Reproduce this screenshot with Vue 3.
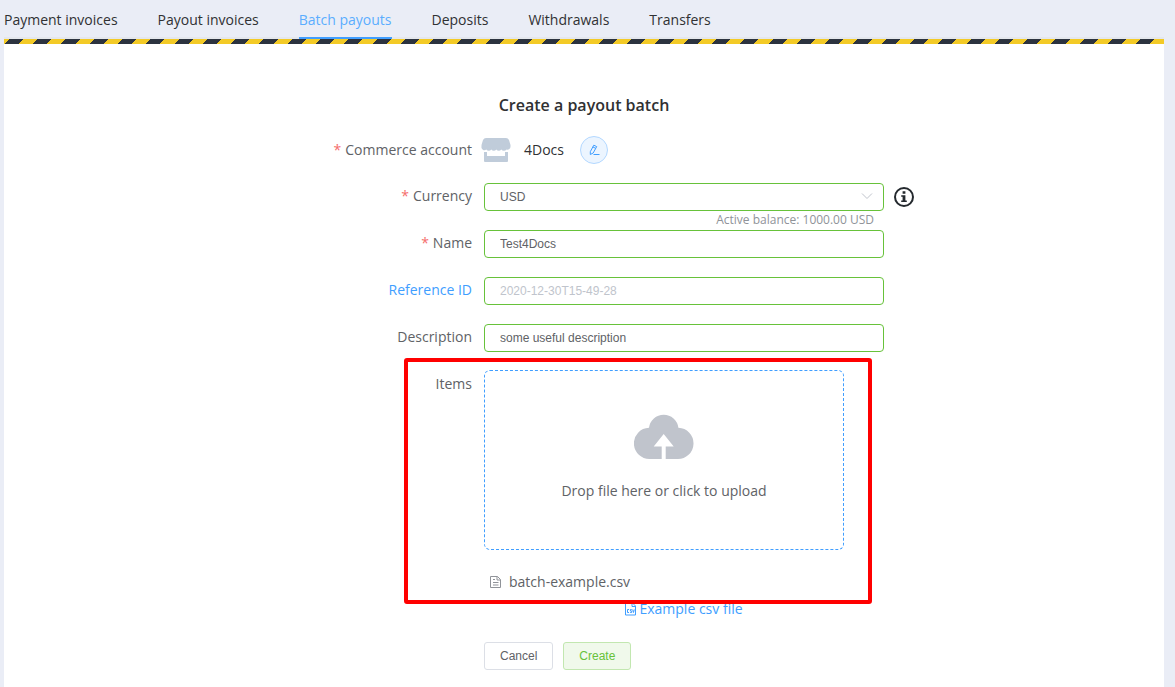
<script setup>
import { ref } from 'vue'

const tabs = ['Payment invoices', 'Payout invoices', 'Batch payouts', 'Deposits', 'Withdrawals', 'Transfers']
const active = ref('Batch payouts')
const currency = ref('USD')
const name = ref('Test4Docs')
const reference = ref('')
const description = ref('some useful description')
</script>

<template>
  <div class="page">
    <nav class="tabs">
      <a
        v-for="tab in tabs"
        :key="tab"
        href="#"
        class="tab"
        :class="{ active: tab === active }"
        @click.prevent="active = tab"
      >{{ tab }}</a>
    </nav>
    <main class="panel">
      <div class="stripe"></div>
      <form class="form" @submit.prevent>
        <h1 class="title">Create a payout batch</h1>

        <div class="row">
          <span class="label tall required">Commerce account</span>
          <div class="content account">
            <svg class="shop" viewBox="0 0 30 26" aria-hidden="true">
              <path d="M5 1h20q2 0 3 2l1.500 5v1.500a3 3 0 0 1-4 3 3.200 3.200 0 0 1-5.200 0 3.200 3.200 0 0 1-5 0 3.200 3.200 0 0 1-5 0 3.200 3.200 0 0 1-5 0 3 3 0 0 1-4.800-3V8L2 3q1-2 3-2z" />
              <path d="M3 15h3v4h18v-4h3v9q0 1-1 1H4q-1 0-1-1z" />
            </svg>
            <span class="account-name">4Docs</span>
            <button type="button" class="edit" aria-label="Change account">
              <svg viewBox="0 0 12 12" aria-hidden="true">
                <path d="M5.800 1.200 8.700 2.600 5.200 9 2.300 10.500 2.300 7.700zM4.800 2.900l2.800 1.400M5.500 10.500h6" />
              </svg>
            </button>
          </div>
        </div>

        <div class="row">
          <label class="label required" for="currency">Currency</label>
          <div class="content">
            <select id="currency" v-model="currency" class="field">
              <option>USD</option>
            </select>
            <svg class="arrow" viewBox="0 0 12 12" aria-hidden="true"><path d="M1 2.500l5 5 5-5" /></svg>
            <svg class="info" viewBox="0 0 20 20" aria-hidden="true">
              <circle cx="10" cy="10" r="9" />
              <path d="M8.600 4.200h2.800v2.600H8.600zM7.200 8.200h4.200v5.200h1.400V15H7.200v-1.600h1.400V9.800H7.200z" />
            </svg>
            <span class="hint">Active balance: 1000.00 USD</span>
          </div>
        </div>

        <div class="row">
          <label class="label required" for="name">Name</label>
          <div class="content"><input id="name" v-model="name" class="field" type="text" /></div>
        </div>

        <div class="row">
          <label class="label link" for="reference">Reference ID</label>
          <div class="content">
            <input id="reference" v-model="reference" class="field" type="text" placeholder="2020-12-30T15-49-28" />
          </div>
        </div>

        <div class="row last-field">
          <label class="label" for="description">Description</label>
          <div class="content"><input id="description" v-model="description" class="field" type="text" /></div>
        </div>

        <div class="row items">
          <label class="label tall" for="file">Items</label>
          <div class="content">
            <label class="dropzone">
              <input id="file" class="file" type="file" accept=".csv" />
              <svg class="cloud" viewBox="0 0 60 46" aria-hidden="true">
                <path d="M16 45a15.600 15.600 0 0 1-1-31.200 14.800 14.800 0 0 1 29.400 0A15.600 15.600 0 0 1 43.400 45H31.700V32.500h8L29.700 20l-10 12.500h8V45z" />
              </svg>
              <span>Drop file here or click to upload</span>
            </label>
            <div class="uploaded">
              <svg viewBox="0 0 14 14" aria-hidden="true">
                <path d="M2.500 1.500h7l3 3v8h-10zM9 1.500V5h3.500M5 4.500h2M5 7.500h5.500M5 10h5.500" />
              </svg>
              <a href="#" class="filename">batch-example.csv</a>
            </div>
          </div>
          <div class="highlight"></div>
        </div>

        <div class="row example-row">
          <a href="#" class="example">
            <svg viewBox="0 0 12 14" aria-hidden="true">
              <path d="M.5 1h7l3 3v9H.5zM7 1v3.500h3.500" />
              <path d="M4 7.500H2.500v3H4M6.700 7.500H5.400V9h1.300v1.500H5.200M7.700 7.500l.8 3 .8-3" />
            </svg>
            <span>Example csv file</span>
          </a>
        </div>

        <div class="row actions">
          <button type="button" class="button">Cancel</button>
          <button type="submit" class="button success">Create</button>
        </div>
      </form>
    </main>
  </div>
</template>

<style>
html {
  background: #eaedf6;
}
</style>

<style scoped>
.page {
  box-sizing: border-box;
  min-height: 100vh;
  padding: 0 11px 0 4px;
  display: flex;
  flex-direction: column;
  background: #eaedf6;
  font-family: "Open Sans", "Noto Sans", sans-serif;
  font-size: 14px;
  color: #606266;
}
.tabs {
  display: flex;
  gap: 40px;
  box-shadow: inset 0 -2px #e4e7ed;
}
.tab {
  height: 39px;
  line-height: 40px;
  color: #303133;
  text-decoration: none;
}
.tab.active {
  color: #5badff;
  box-shadow: inset 0 -2px #409eff;
}
.panel {
  flex: 1;
  background: #fff;
}
.stripe {
  height: 5px;
  background: repeating-linear-gradient(-45deg, #f3ca26 0, #f3ca26 10px, #2c333f 10px, #2c333f 20px);
}
.form {
  width: 600px;
  max-width: 100%;
  margin: 0 auto;
  padding: 49px 0 17px;
}
.title {
  margin: 0 0 18px;
  text-align: center;
  font-size: 16px;
  line-height: 25px;
  font-weight: 600;
  color: #303133;
}
.row {
  position: relative;
  display: flex;
  margin-bottom: 19px;
  line-height: 28px;
}
.label {
  box-sizing: border-box;
  width: 200px;
  padding-right: 12px;
  text-align: right;
  line-height: 26px;
}
.label.tall {
  line-height: 28px;
}
.required::before {
  content: "*";
  margin-right: 4px;
  color: #f56c6c;
}
.label.link {
  color: #409eff;
}
.content {
  position: relative;
  flex: 1;
}
.account {
  display: flex;
  align-items: center;
}
.shop {
  width: 30px;
  height: 26px;
  margin-left: -3px;
  fill: #c0ccda;
}
.account-name {
  margin: 0 16px 0 13px;
  color: #303133;
}
.edit {
  display: flex;
  align-items: center;
  justify-content: center;
  width: 28px;
  height: 28px;
  padding: 0;
  border: 1px solid #b3d8ff;
  border-radius: 50%;
  background: #ecf5ff;
}
.edit svg {
  width: 12px;
  height: 12px;
  fill: none;
  stroke: #409eff;
}
.field {
  display: block;
  box-sizing: border-box;
  width: 100%;
  height: 28px;
  padding: 0 15px;
  border: 1px solid #67c23a;
  border-radius: 4px;
  appearance: none;
  background: #fff;
  font-family: "Liberation Sans", Arial, sans-serif;
  font-size: 12px;
  color: #606266;
}
.field::placeholder {
  color: #c0c4cc;
}
.arrow {
  position: absolute;
  top: 8px;
  right: 11px;
  width: 12px;
  height: 12px;
  fill: none;
  stroke: #c0c4cc;
  pointer-events: none;
}
.info {
  position: absolute;
  top: 4px;
  left: calc(100% + 10px);
  width: 20px;
  height: 20px;
  fill: #24292e;
}
.info circle {
  fill: none;
  stroke: #24292e;
  stroke-width: 2;
}
.hint {
  position: absolute;
  top: 28px;
  right: 10px;
  font-size: 12px;
  line-height: 18px;
  color: #909399;
}
.last-field {
  margin-bottom: 18px;
}
.items {
  margin: 0;
}
.dropzone {
  box-sizing: border-box;
  display: flex;
  flex-direction: column;
  align-items: center;
  width: 360px;
  height: 180px;
  padding-top: 43px;
  border: 1px dashed #409eff;
  border-radius: 6px;
}
.file {
  position: absolute;
  width: 1px;
  height: 1px;
  opacity: 0;
}
.cloud {
  width: 60px;
  height: 46px;
  margin-bottom: 17px;
  fill: #c0c4cc;
}
.uploaded {
  display: flex;
  align-items: center;
  gap: 7px;
  padding: 18px 0 0 4px;
}
.uploaded svg {
  width: 14px;
  height: 14px;
  fill: none;
  stroke: #909399;
}
.filename {
  color: #606266;
  text-decoration: none;
}
.highlight {
  position: absolute;
  top: -12px;
  right: 12px;
  bottom: -8px;
  left: 120px;
  border: 4px solid #f00;
  border-radius: 3px;
  z-index: 1;
  pointer-events: none;
}
.example-row {
  justify-content: center;
  margin: 0 0 20px 200px;
  line-height: 26px;
}
.example {
  display: flex;
  align-items: center;
  gap: 2px;
  color: #409eff;
  text-decoration: none;
}
.example svg {
  width: 12px;
  height: 14px;
  fill: none;
  stroke: #409eff;
}
.actions {
  gap: 10px;
  margin: 0 0 0 200px;
}
.button {
  height: 28px;
  padding: 0 15px;
  border: 1px solid #dcdfe6;
  border-radius: 3px;
  background: #fff;
  font-family: "Liberation Sans", Arial, sans-serif;
  font-size: 12px;
  color: #606266;
}
.button.success {
  border-color: #c2e7b0;
  background: #f0f9eb;
  color: #67c23a;
}
</style>
